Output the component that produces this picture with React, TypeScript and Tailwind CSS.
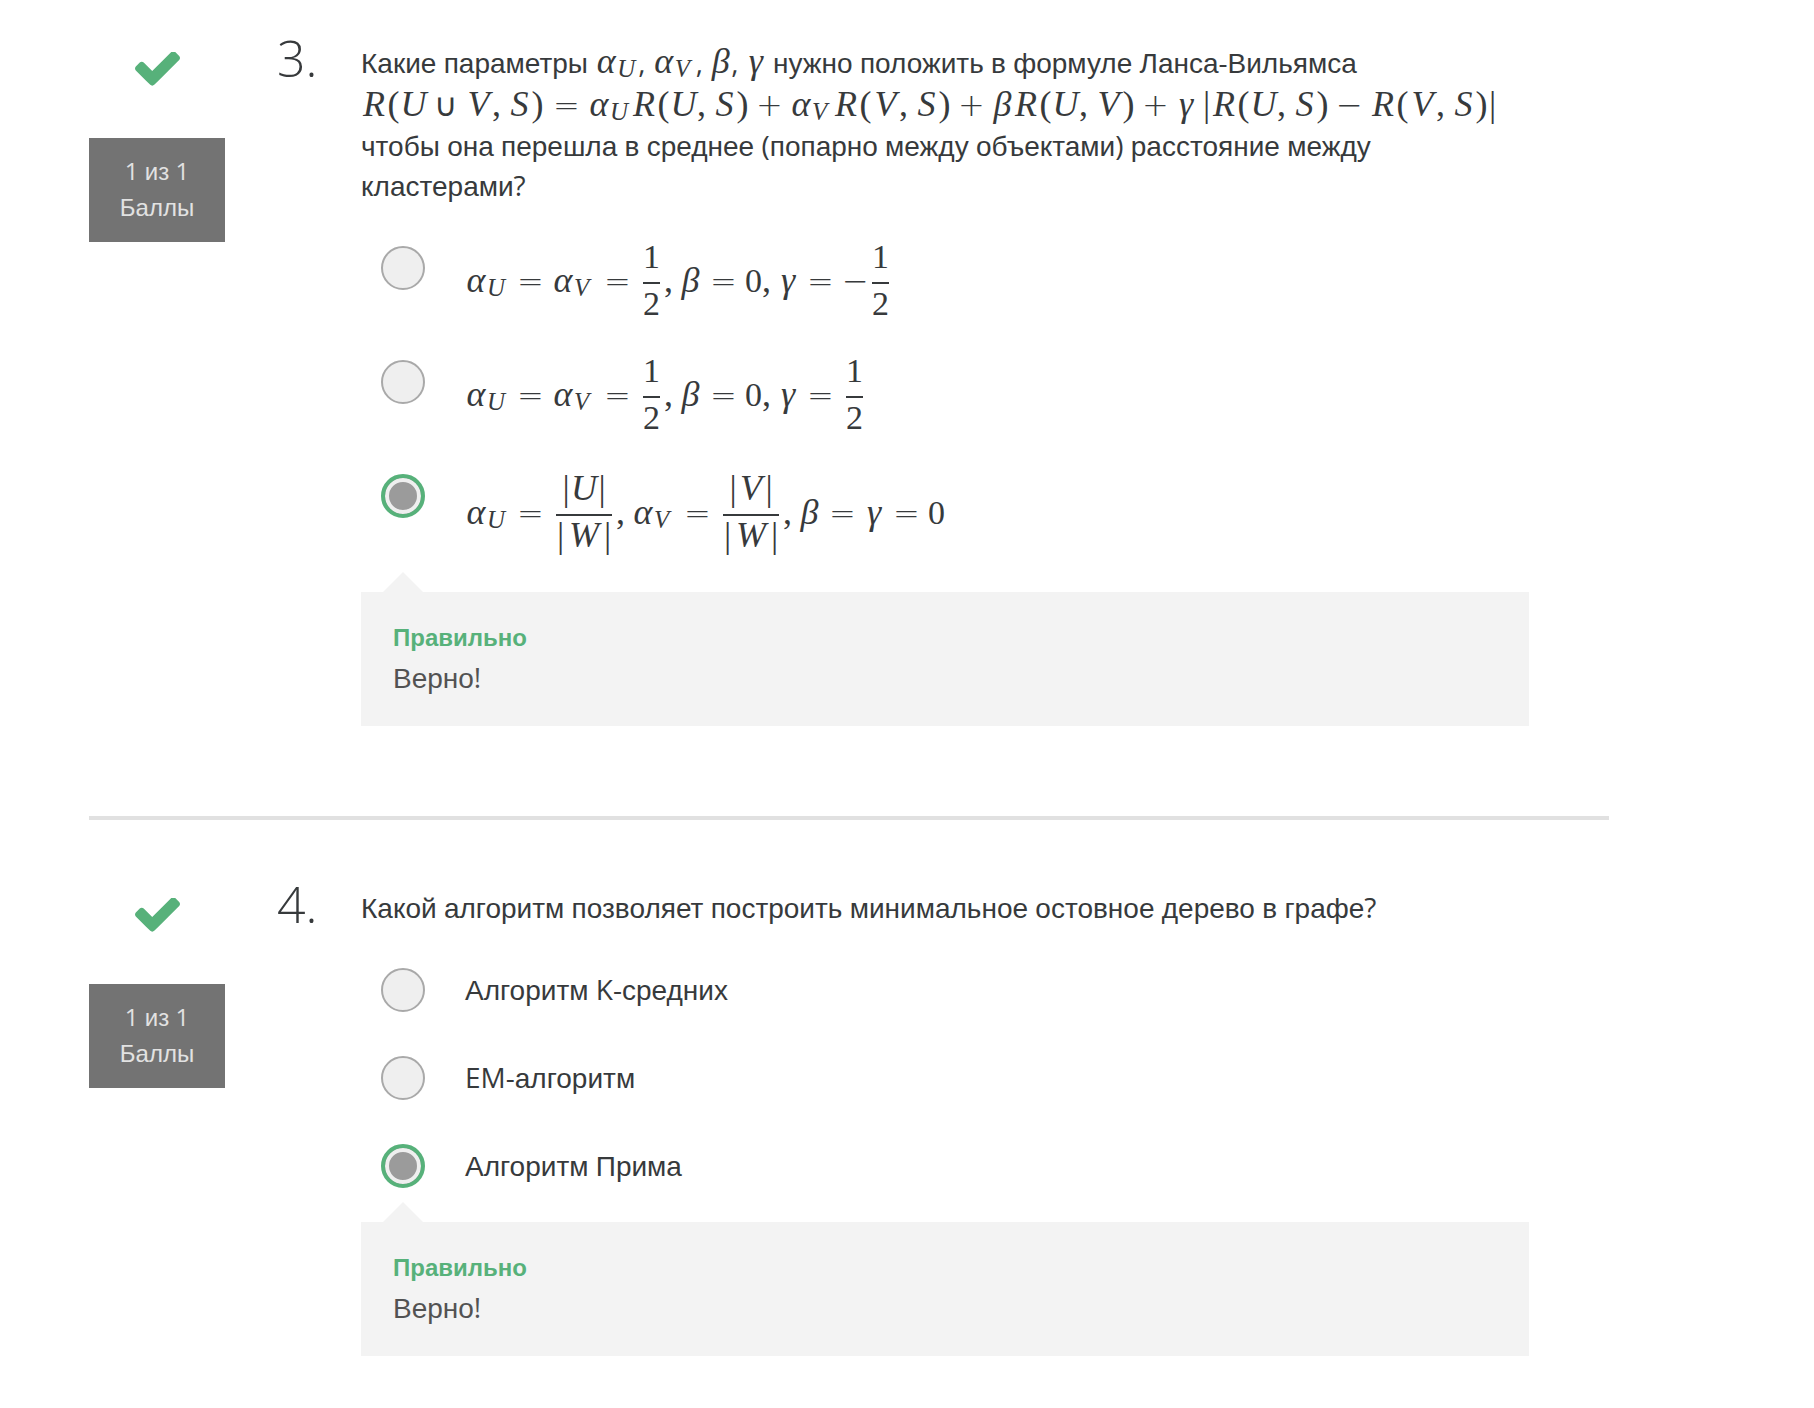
import React, { Fragment } from "react";

/* ---------- text with Latin letters, digits, spaces and marks in their own face ---------- */

function Mixed({ text }: { text: string }) {
  const runs = text.split(/([^А-Яа-яЁё]+)/);
  return (
    <>
      {runs.map((run, i) =>
        i % 2 === 1 ? (
          <span key={i} className="font-['Open_Sans',sans-serif] leading-none">
            {run}
          </span>
        ) : (
          <Fragment key={i}>{run}</Fragment>
        ),
      )}
    </>
  );
}

/* ---------- formulas ---------- */

const letter = "inline-block text-center italic leading-none";
const upright = "inline-block text-center leading-none";
const digit = "inline-block w-[17px] text-center text-[34px] leading-none";
const subscript = "inline-block w-[21px] text-left italic leading-none text-[25px] align-[-4px]";
const operator =
  "inline-block text-center text-[32px] leading-none font-extralight font-['DejaVu_Sans',sans-serif]";

const glyphs: Record<string, { char: string; className: string }> = {
  R: { char: "R", className: `${letter} w-[26px]` },
  U: { char: "U", className: `${letter} w-[27px]` },
  V: { char: "V", className: `${letter} w-[27px]` },
  W: { char: "W", className: `${letter} w-[38px]` },
  S: { char: "S", className: `${letter} w-[23px]` },
  a: { char: "α", className: `${letter} w-[22px]` },
  b: { char: "β", className: `${letter} w-[21px]` },
  g: { char: "γ", className: `${letter} w-[20px]` },
  _U: { char: "U", className: subscript },
  _V: { char: "V", className: subscript },
  "(": { char: "(", className: `${upright} w-[13px]` },
  ")": { char: ")", className: `${upright} w-[13px]` },
  "|": { char: "|", className: `${upright} w-[9px]` },
  ",": { char: ",", className: `${upright} w-[9px] mr-[7px]` },
  "0": { char: "0", className: digit },
  "1": { char: "1", className: digit },
  "2": { char: "2", className: digit },
  "=": { char: "=", className: `${operator} w-[26px] mx-[9px]` },
  "+": { char: "+", className: `${operator} w-[26px] ml-[7px] mr-2` },
  "-": { char: "−", className: `${operator} w-[26px] ml-[7px] mr-2` },
  neg: { char: "−", className: `${operator} w-[26px]` },
  cup: { char: "∪", className: `${operator} w-[23px] ml-[7px] mr-2` },
  sp: { char: "", className: `${upright} w-[6px]` },
};

function Tex({ src }: { src: string }) {
  return (
    <span className="whitespace-nowrap font-['Liberation_Serif',serif] text-[36px] leading-none">
      {src.split(" ").map((token, i) => (
        <span key={i} className={glyphs[token].className}>
          {glyphs[token].char}
        </span>
      ))}
    </span>
  );
}

function Frac({ num, den, tall }: { num: string; den: string; tall?: boolean }) {
  return (
    <span
      className={`mx-1 inline-flex flex-col items-center align-[24px] text-[36px] leading-[38px] ${tall ? "py-1" : ""}`}
    >
      <span className="h-[46px] pt-px leading-[38px]">
        <Tex src={num} />
      </span>
      <span className="h-0.5 w-full bg-[#373a3c]" />
      <span className="h-[46px] leading-[38px]">
        <Tex src={den} />
      </span>
    </span>
  );
}

function Formula({ children }: { children: React.ReactNode }) {
  return (
    <span className="block whitespace-nowrap font-['Liberation_Serif',serif] text-[36px] leading-none">
      {children}
    </span>
  );
}

/* ---------- quiz parts ---------- */

function CheckMark() {
  return (
    <svg viewBox="121 374 1550 1148" className="h-[34px] w-[45px] fill-[#57b17a]" aria-hidden="true">
      <path d="M1671 566q0 40-28 68l-724 724-136 136q-28 28-68 28t-68-28l-136-136-362-362q-28-28-28-68t28-68l136-136q28-28 68-28t68 28l294 295 656-657q28-28 68-28t68 28l136 136q28 28 28 68z" />
    </svg>
  );
}

function Option({
  name,
  checked,
  children,
}: {
  name: string;
  checked?: boolean;
  children: React.ReactNode;
}) {
  return (
    <label className="flex min-h-[68px] items-start gap-10 pl-5">
      <input
        type="radio"
        name={name}
        defaultChecked={checked}
        className="mt-2.5 size-11 shrink-0 appearance-none rounded-full border-2 border-[#a9a9a9] bg-[#efefef] checked:border-4 checked:border-[#57b17a] checked:bg-[#9b9b9b] checked:shadow-[inset_0_0_0_4px_#efefef]"
      />
      <span>{children}</span>
    </label>
  );
}

function TextOption({ text }: { text: string }) {
  return (
    <span className="block pt-[13px] leading-10">
      <Mixed text={text} />
    </span>
  );
}

function Feedback() {
  return (
    <div className="relative mt-5 bg-[#f3f3f3] px-8 pt-7 pb-6">
      <span className="absolute bottom-full left-[22px] border-x-20 border-b-20 border-x-transparent border-b-[#f3f3f3]" />
      <h3 className="text-[24px] leading-9 font-bold text-[#57b17a]">Правильно</h3>
      <p className="text-[28px] leading-[46px] text-[#525252]">
        <Mixed text="Верно!" />
      </p>
    </div>
  );
}

function Question({
  number,
  prompt,
  children,
}: {
  number: string;
  prompt: React.ReactNode;
  children: React.ReactNode;
}) {
  return (
    <section className="flex">
      <div className="flex w-[136px] shrink-0 flex-col items-center">
        <div className="mt-5">
          <CheckMark />
        </div>
        <div className="mt-[52px] w-full bg-[#737373] py-4 text-center text-[24px] leading-9 text-[#e2e2e2]">
          <p>
            <Mixed text="1 из 1" />
          </p>
          <p>Баллы</p>
        </div>
      </div>
      <div className="w-[136px] shrink-0 pt-px pl-[52px] font-['Open_Sans',sans-serif] text-[50px] leading-[50px] font-light">
        {number}
      </div>
      <div className="min-w-0 flex-1 pt-[11px] pr-20">
        <div className="text-[28px] leading-10">{prompt}</div>
        <div className="mt-[29px] flex flex-col gap-5 text-[28px]">{children}</div>
        <Feedback />
      </div>
    </section>
  );
}

export default function App() {
  return (
    <main className="min-h-screen bg-white pt-8 pr-[205px] pl-[89px] font-['Liberation_Sans',sans-serif] text-[#373a3c]">
      <Question
        number="3."
        prompt={
          <p>
            <Mixed text="Какие параметры " />
            <Tex src="a _U" />
            <Mixed text=", " />
            <Tex src="a _V" />
            <Mixed text=", " />
            <Tex src="b" />
            <Mixed text=", " />
            <Tex src="g" />
            <Mixed text=" нужно положить в формуле Ланса-Вильямса " />
            <span className="inline-block pt-0.5 leading-9">
              <Tex src="R ( U cup V , S ) = a _U R ( U , S ) + a _V R ( V , S ) + b R ( U , V ) + g sp | R ( U , S ) - R ( V , S ) |" />
            </span>
            <Mixed text=" чтобы она перешла в среднее (попарно между объектами) расстояние между кластерами?" />
          </p>
        }
      >
        <Option name="q3">
          <Formula>
            <Tex src="a _U = a _V =" />
            <Frac num="1" den="2" />
            <Tex src=", b = 0 , g = neg" />
            <Frac num="1" den="2" />
          </Formula>
        </Option>
        <Option name="q3">
          <Formula>
            <Tex src="a _U = a _V =" />
            <Frac num="1" den="2" />
            <Tex src=", b = 0 , g =" />
            <Frac num="1" den="2" />
          </Formula>
        </Option>
        <Option name="q3" checked>
          <span className="block pb-1.5">
            <Formula>
              <Tex src="a _U =" />
              <Frac tall num="| U |" den="| W |" />
              <Tex src=", a _V =" />
              <Frac tall num="| V |" den="| W |" />
              <Tex src=", b = g = 0" />
            </Formula>
          </span>
        </Option>
      </Question>

      <hr className="mt-[90px] mb-[58px] border-t-4 border-[#e1e1e1]" />

      <Question
        number="4."
        prompt={
          <p>
            <Mixed text="Какой алгоритм позволяет построить минимальное остовное дерево в графе?" />
          </p>
        }
      >
        <Option name="q4">
          <TextOption text="Алгоритм K-средних" />
        </Option>
        <Option name="q4">
          <TextOption text="EM-алгоритм" />
        </Option>
        <Option name="q4" checked>
          <TextOption text="Алгоритм Прима" />
        </Option>
      </Question>
    </main>
  );
}
